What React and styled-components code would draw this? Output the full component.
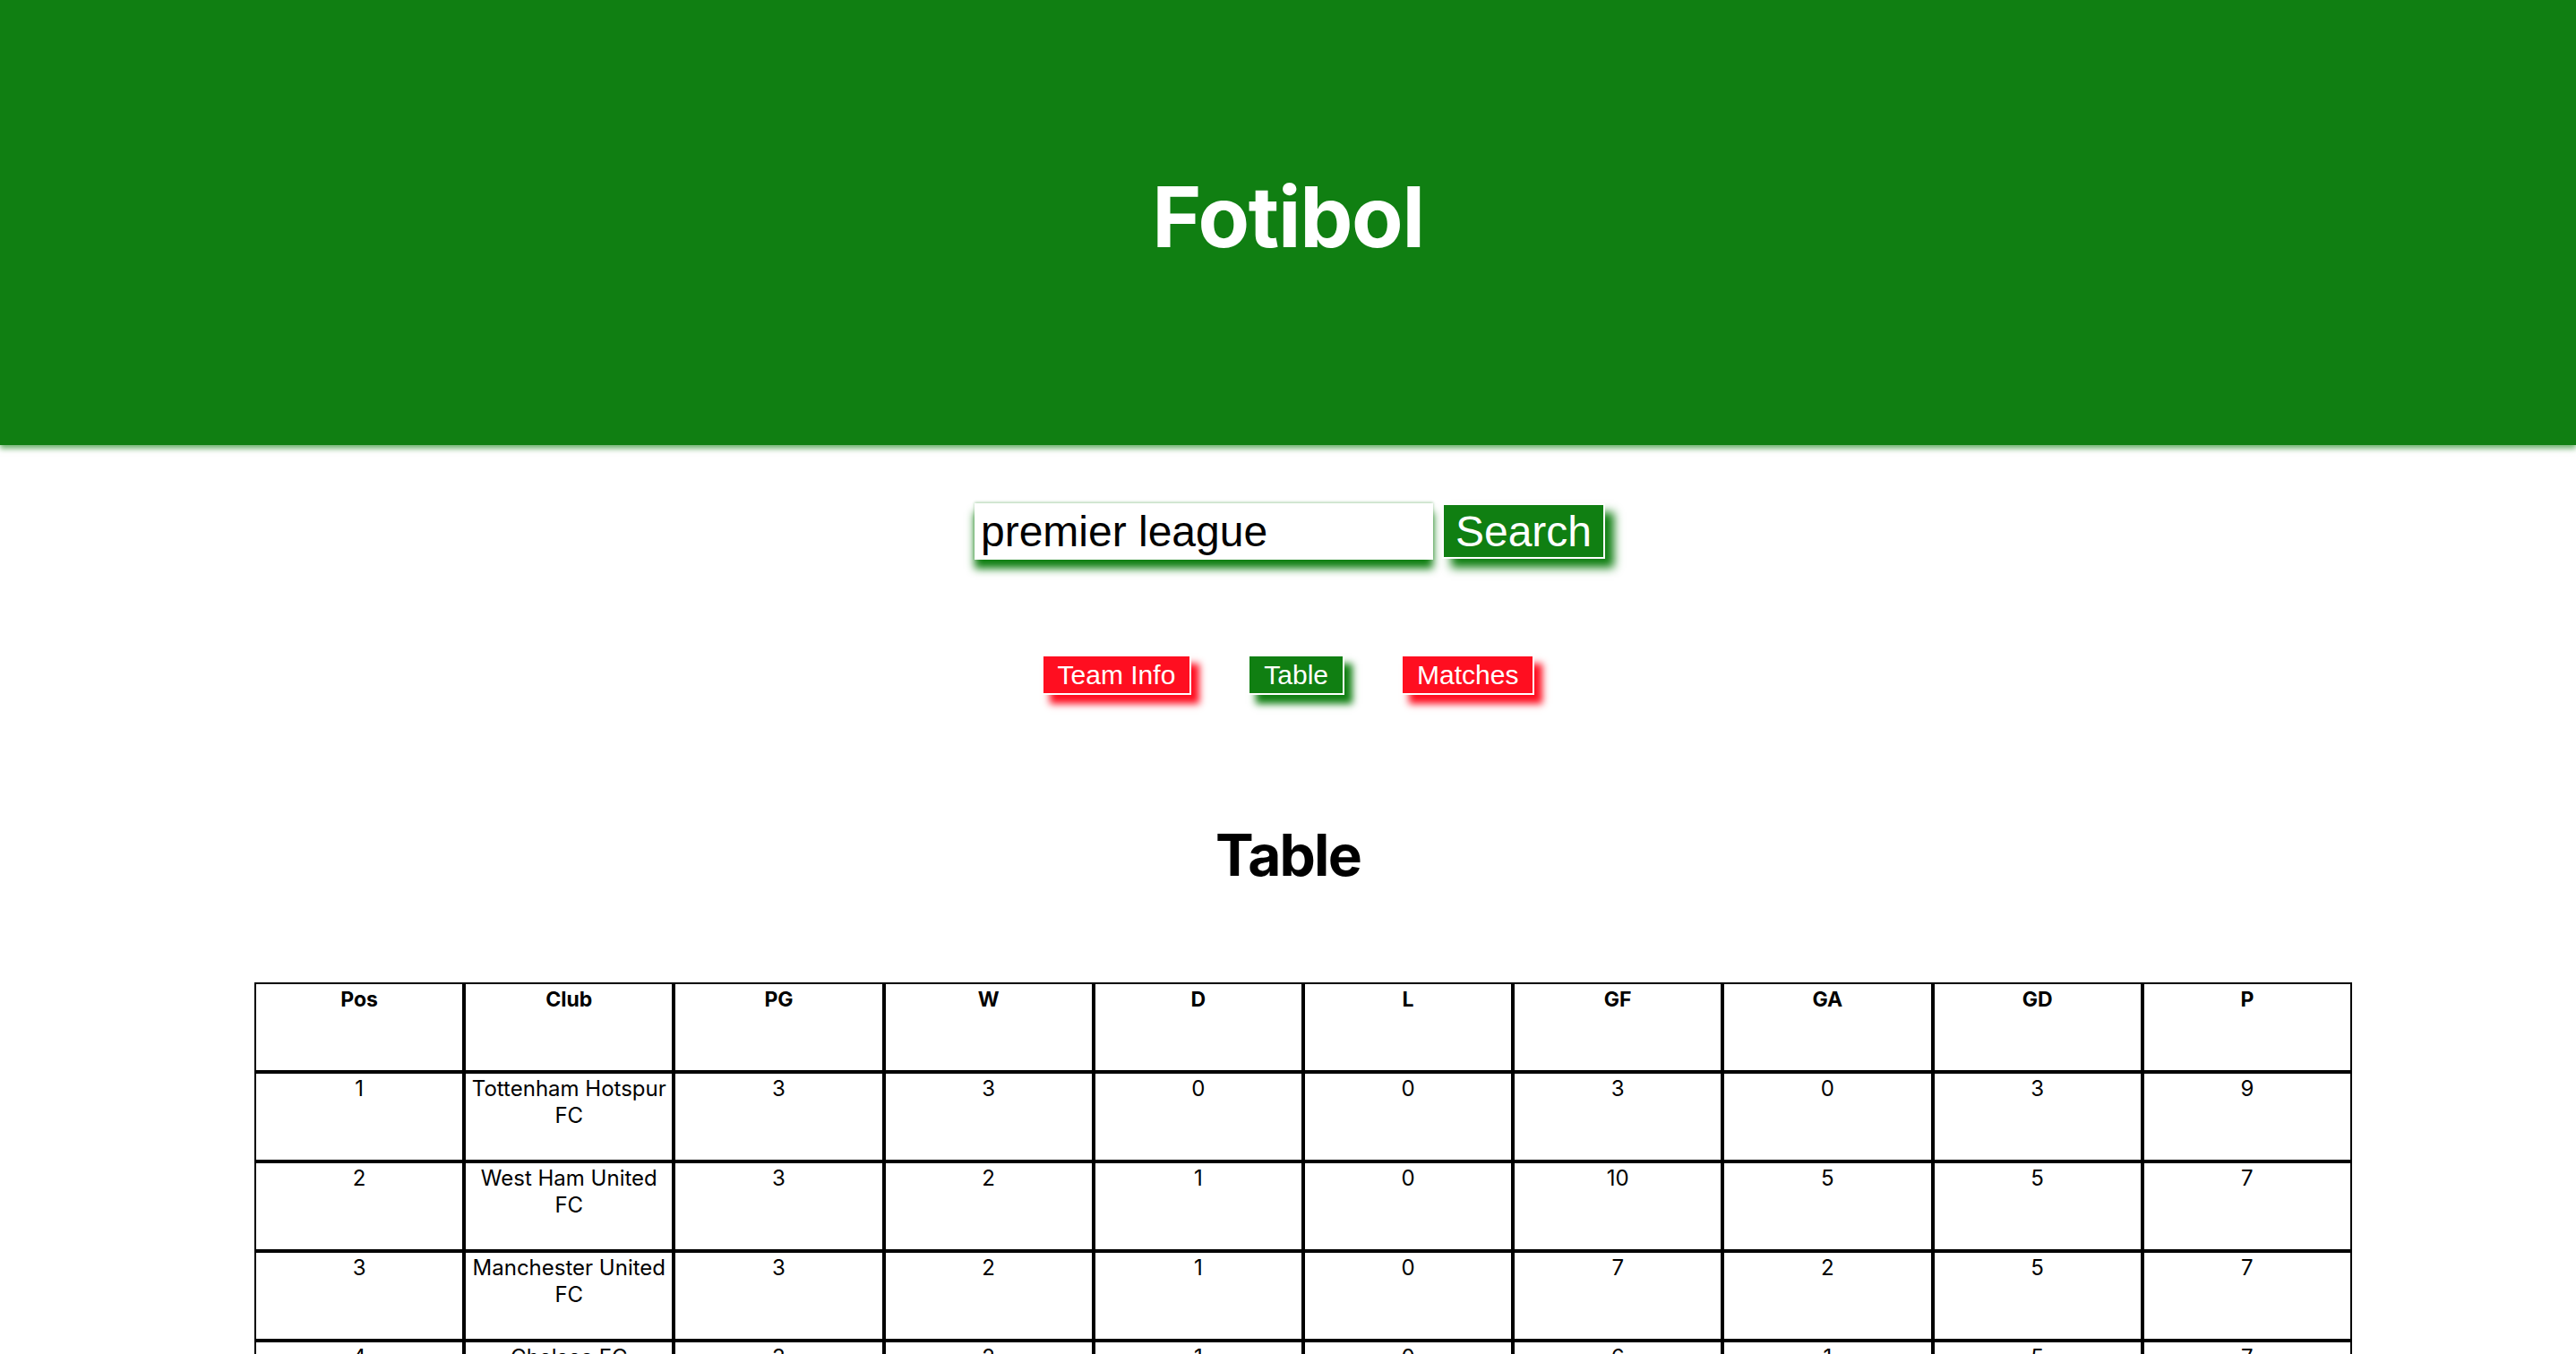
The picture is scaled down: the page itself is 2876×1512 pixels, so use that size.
import styled, { createGlobalStyle } from "styled-components";

const GREEN = "#107f12";
const RED = "#ff0e20";

const GlobalStyle = createGlobalStyle`
  body {
    margin: 0;
    background: #fff;
    font-family: Inter, "Liberation Sans", sans-serif;
    color: #000;
  }
`;

const Header = styled.header`
  height: 497px;
  box-sizing: border-box;
  padding-top: 185px;
  background: ${GREEN};
  box-shadow: 0 4px 6px rgba(16, 127, 18, 0.6);
  text-align: center;
`;

const Title = styled.h1`
  margin: 0;
  font-size: 94px;
  font-weight: 700;
  letter-spacing: -1.3px;
  color: #fff;
`;

const SearchForm = styled.form`
  display: flex;
  justify-content: center;
  gap: 10px;
  margin-top: 65px;
  padding-left: 4px;
`;

const SearchInput = styled.input`
  width: 512px;
  height: 63px;
  box-sizing: border-box;
  padding: 0 7px;
  border: none;
  outline: none;
  font-family: "Liberation Sans", Arial, sans-serif;
  font-size: 48px;
  color: #000;
  box-shadow: 0 10px 9px ${GREEN}, 0 -1px 3px rgba(16, 127, 18, 0.35);
`;

const SearchButton = styled.button`
  height: 62px;
  box-sizing: border-box;
  padding: 0 13px;
  border: 2px solid #fff;
  background: ${GREEN};
  color: #fff;
  font-family: "Liberation Sans", Arial, sans-serif;
  font-size: 48px;
  box-shadow: 10px 10px 10px ${GREEN};
`;

const Tabs = styled.nav`
  display: flex;
  justify-content: center;
  gap: 63px;
  margin-top: 106px;
`;

const TabButton = styled.button`
  height: 45px;
  box-sizing: border-box;
  padding: 0 16px;
  border: 2px solid #fff;
  background: ${(p) => (p.$active ? GREEN : RED)};
  color: #fff;
  font-family: "Liberation Sans", Arial, sans-serif;
  font-size: 30px;
  line-height: 1;
  box-shadow: 9px 10px 8px ${(p) => (p.$active ? GREEN : RED)};
`;

const SectionTitle = styled.h2`
  margin: 140px 0 0;
  text-align: center;
  font-size: 64px;
  font-weight: 700;
  letter-spacing: -1.8px;
  line-height: 1.21;
`;

const StandingsTable = styled.table`
  width: 2342px;
  margin: 104px 0 0 284px;
  border-collapse: separate;
  border-spacing: 0;
  table-layout: fixed;
  font-size: 24px;
  line-height: 30px;
`;

const Row = styled.tr`
  height: 100px;
`;

const HeadCell = styled.th`
  border: 2px solid #000;
  padding: 2px;
  vertical-align: top;
  font-weight: 700;
  font-size: 23px;
  text-align: center;
`;

const Cell = styled.td`
  border: 2px solid #000;
  padding: 2px 3px;
  vertical-align: top;
  text-align: center;
`;

const columns = ["Pos", "Club", "PG", "W", "D", "L", "GF", "GA", "GD", "P"];

const standings = [
  [1, "Tottenham Hotspur FC", 3, 3, 0, 0, 3, 0, 3, 9],
  [2, "West Ham United FC", 3, 2, 1, 0, 10, 5, 5, 7],
  [3, "Manchester United FC", 3, 2, 1, 0, 7, 2, 5, 7],
  [4, "Chelsea FC", 3, 2, 1, 0, 6, 1, 5, 7],
  [5, "Liverpool FC", 3, 2, 1, 0, 6, 1, 5, 7],
  [6, "Everton FC", 3, 2, 1, 0, 7, 3, 4, 7],
];

export default function App() {
  return (
    <>
      <GlobalStyle />
      <Header>
        <Title>Fotibol</Title>
      </Header>
      <SearchForm onSubmit={(e) => e.preventDefault()}>
        <SearchInput defaultValue="premier league" />
        <SearchButton type="submit">Search</SearchButton>
      </SearchForm>
      <Tabs>
        <TabButton>Team Info</TabButton>
        <TabButton $active>Table</TabButton>
        <TabButton>Matches</TabButton>
      </Tabs>
      <SectionTitle>Table</SectionTitle>
      <StandingsTable>
        <thead>
          <Row>
            {columns.map((c) => (
              <HeadCell key={c}>{c}</HeadCell>
            ))}
          </Row>
        </thead>
        <tbody>
          {standings.map((r) => (
            <Row key={r[0]}>
              {r.map((v, i) => (
                <Cell key={i}>{v}</Cell>
              ))}
            </Row>
          ))}
        </tbody>
      </StandingsTable>
    </>
  );
}
